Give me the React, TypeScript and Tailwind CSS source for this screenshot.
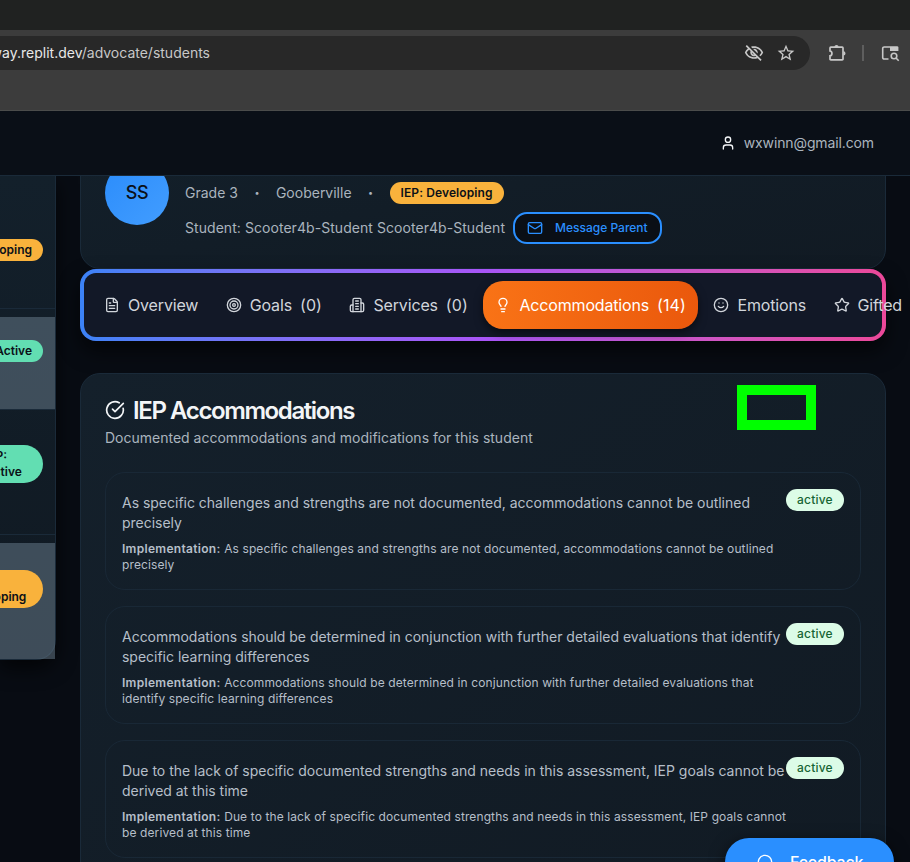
import type { ReactNode } from "react";
import { CircleCheckBig, FileText, Lightbulb, Mail, MessageCircle, Smile, Star, Target, User } from "lucide-react";
import { MdOutlineVisibilityOff, MdStarOutline } from "react-icons/md";

const accommodations: { text: [string, string]; detail: [string, string] }[] = [
  {
    text: [
      "As specific challenges and strengths are not documented, accommodations cannot be outlined",
      "precisely",
    ],
    detail: [
      "As specific challenges and strengths are not documented, accommodations cannot be outlined",
      "precisely",
    ],
  },
  {
    text: [
      "Accommodations should be determined in conjunction with further detailed evaluations that identify",
      "specific learning differences",
    ],
    detail: [
      "Accommodations should be determined in conjunction with further detailed evaluations that",
      "identify specific learning differences",
    ],
  },
  {
    text: [
      "Due to the lack of specific documented strengths and needs in this assessment, IEP goals cannot be",
      "derived at this time",
    ],
    detail: [
      "Due to the lack of specific documented strengths and needs in this assessment, IEP goals cannot",
      "be derived at this time",
    ],
  },
];

function BrowserBar() {
  return (
    <div className="shrink-0">
      <div className="h-[30px] bg-[#202221]" />
      <div className="h-[81px] border-b border-[#4b4c4b] bg-[#3c3c3c] pt-1.5">
        <div className="flex h-[34px] items-center">
          <div className="flex h-full w-[810px] items-center justify-between rounded-r-full bg-[#282828] pr-3.5">
            <div className="flex h-5 w-[210px] justify-end">
              <span className="shrink-0 text-[14px] leading-5 whitespace-nowrap text-[#c7c7c7]">
                <span className="text-[#e8e8e8]">way.replit.dev</span>/advocate/students
              </span>
            </div>
            <div className="flex items-center gap-3 text-[#c7c7c7]">
              <MdOutlineVisibilityOff size={20} />
              <MdStarOutline size={20} />
            </div>
          </div>
          <svg width="20" height="20" viewBox="0 0 20 20" fill="none" className="ml-[17px] shrink-0 text-[#c7c7c7]">
            <path
              d="M3.800 4.200h11.400a.8.8 0 0 1 .8.8v11a.8.8 0 0 1-.8.8H3.800a.8.8 0 0 1-.8-.8v-3.200c2.600-.4 2.600-4.400 0-4.800V5a.8.8 0 0 1 .8-.8Z"
              stroke="currentColor"
              strokeWidth="1.700"
            />
            <path d="M7.400 4a2.100 2.100 0 0 1 4.200 0ZM16.400 8.300a2.100 2.100 0 0 1 0 4.200Z" fill="currentColor" />
          </svg>
          <div className="ml-[15px] h-4 w-0.5 bg-[#5e5e5e]" />
          <svg width="20" height="20" viewBox="0 0 20 20" fill="none" className="ml-4 shrink-0 text-[#c7c7c7]">
            <path d="M8.500 16H4.200A1.500 1.500 0 0 1 2.700 14.500V5.500A1.500 1.500 0 0 1 4.200 4H10" stroke="currentColor" strokeWidth="1.600" />
            <path d="M10 3.200h7a1.400 1.400 0 0 1 1.400 1.400V8H10z" fill="currentColor" />
            <circle cx="14" cy="13" r="2.800" stroke="currentColor" strokeWidth="1.600" />
            <path d="m16 15 2.700 2.700" stroke="currentColor" strokeWidth="1.600" />
          </svg>
        </div>
      </div>
    </div>
  );
}

function Sidebar() {
  return (
    <aside className="h-[484px] w-14 shrink-0 rounded-br-[20px] border-r border-b border-[#1a2a39] bg-linear-to-b from-[#13202b] to-[#101922] text-xs leading-4 font-semibold text-[#0b1018] shadow-[0_8px_20px_rgba(0,0,0,0.7)]">
      <div className="flex h-[133px] justify-end border-b border-[#1a2a39] pt-[63px] pr-3">
        <span className="h-[22px] w-[114px] shrink-0 rounded-full bg-[#f9b23c] px-[11px] py-[3px] text-right whitespace-nowrap">
          IEP: Developing
        </span>
      </div>
      <div className="mt-2 flex h-[93px] justify-end border-b border-[#1a2a39] bg-[#6c7f90]/50 pt-[23px] pr-3">
        <span className="h-[22px] w-[85px] shrink-0 rounded-full bg-[#62deb2] px-[11px] py-[3px] text-right whitespace-nowrap">
          IEP: Active
        </span>
      </div>
      <div className="flex h-[125px] justify-end border-b border-[#1a2a39] pt-[35px] pr-3">
        <span className="h-[38px] w-[69px] shrink-0 rounded-full bg-[#62deb2] px-[11px] py-[3px]">
          IEP:
          <br />
          Active
        </span>
      </div>
      <div className="mt-2 flex h-[116px] justify-end bg-[#6c7f90]/50 pt-[27px] pr-3">
        <span className="h-[38px] w-[93px] shrink-0 rounded-full bg-[#f9b23c] px-[11px] py-[3px]">
          IEP:
          <br />
          Developing
        </span>
      </div>
    </aside>
  );
}

function Dot() {
  return <span className="mx-4 w-[6px] text-center text-[9px]">•</span>;
}

function StudentCard() {
  return (
    <section className="-mt-16 flex h-[157px] items-end gap-4 rounded-[20px] border border-[#1a2a39] bg-linear-to-br from-[#13202b] to-[#111a23] px-6 pb-6">
      <div className="mb-[19px] flex size-16 shrink-0 items-center justify-center rounded-full bg-linear-to-br from-[#2a8cfb] to-[#429dff] text-lg font-medium tracking-[-0.4px] text-[#0b1018]">
        SS
      </div>
      <div className="flex flex-col gap-2 text-sm whitespace-nowrap text-[#aab4be]">
        <div className="flex h-[22px] items-center">
          <span>Grade 3</span>
          <Dot />
          <span>Gooberville</span>
          <Dot />
          <span className="w-[114px] rounded-full bg-[#f9b23c] px-[11px] py-[3px] text-xs leading-4 font-semibold tracking-[0.1px] text-[#0b1018]">
            IEP: Developing
          </span>
        </div>
        <div className="flex items-center gap-2">
          <span className="tracking-[0.055px]">Student: Scooter4b-Student Scooter4b-Student</span>
          <button className="flex h-8 w-[149px] items-center gap-3 rounded-[14px] border-2 border-[#2a8fff] bg-[#0a0f16] pl-3 text-xs font-medium text-[#2a8fff]">
            <Mail size={16} />
            Message Parent
          </button>
        </div>
      </div>
    </section>
  );
}

function BuildingIcon() {
  return (
    <svg
      width="16"
      height="16"
      viewBox="0 0 24 24"
      fill="none"
      stroke="currentColor"
      strokeWidth="2"
      strokeLinecap="round"
      strokeLinejoin="round"
    >
      <path d="M6 22V4a2 2 0 0 1 2-2h8a2 2 0 0 1 2 2v18Z" />
      <path d="M6 12H4a2 2 0 0 0-2 2v6a2 2 0 0 0 2 2h2" />
      <path d="M18 9h2a2 2 0 0 1 2 2v9a2 2 0 0 1-2 2h-2" />
      <path d="M10 6h4M10 10h4M10 14h4M10 18h4" />
    </svg>
  );
}

function Tab({ icon, label, count, active }: { icon: ReactNode; label: string; count?: number; active?: boolean }) {
  return (
    <button
      className={
        active
          ? "flex h-12 shrink-0 items-center gap-2 rounded-[20px] bg-linear-to-r from-[#f97316] to-[#ea580c] px-3 text-white shadow-[0_4px_8px_rgba(0,0,0,0.5)]"
          : "flex h-12 shrink-0 items-center gap-2 rounded-[20px] px-3 text-[#d1d5db]"
      }
    >
      {icon}
      <span className="tracking-[-0.16px]">{label}</span>
      {count !== undefined && <span className="tracking-[0.08px]">({count})</span>}
    </button>
  );
}

function Tabs() {
  return (
    <nav className="h-[72px] rounded-2xl bg-linear-to-r from-[#3b82f6] via-[#a855f7] to-[#ec4899] p-1 shadow-[0_10px_20px_rgba(0,0,0,0.6)]">
      <div className="flex h-16 items-center gap-[3.5px] rounded-xl bg-[#121827] px-2 text-base whitespace-nowrap">
        <Tab icon={<FileText size={16} />} label="Overview" />
        <Tab icon={<Target size={16} />} label="Goals" count={0} />
        <Tab icon={<BuildingIcon />} label="Services" count={0} />
        <Tab icon={<Lightbulb size={16} />} label="Accommodations" count={14} active />
        <Tab icon={<Smile size={16} />} label="Emotions" />
        <Tab icon={<Star size={16} />} label="Gifted" />
      </div>
    </nav>
  );
}

function Accommodations() {
  return (
    <section className="mt-8 h-[600px] rounded-[20px] border border-[#1a2a39] bg-linear-to-br from-[#14202b] to-[#111a23] p-6">
      <div className="flex items-start justify-between">
        <div>
          <h2 className="flex h-6 items-center gap-2 text-2xl font-semibold tracking-[-1.400px] text-[#f3f5f7]">
            <CircleCheckBig size={20} />
            <span className="pt-0.5">IEP Accommodations</span>
          </h2>
          <p className="mt-1.5 text-sm text-[#aab4be]">Documented accommodations and modifications for this student</p>
        </div>
        <div className="-mt-[13px] mr-[45px] h-[45px] w-[79px] border-10 border-[#00ff00]" />
      </div>
      <ul className="mt-6 flex flex-col gap-4">
        {accommodations.map((item) => (
          <li key={item.text[0]} className="flex h-[118px] justify-between rounded-[20px] border border-[#192836] p-4">
            <div className="w-0 whitespace-nowrap text-[#b6bfc9]">
              <p className="mt-1 text-sm tracking-[-0.015px]">
                {item.text[0]}
                <br />
                {item.text[1]}
              </p>
              <p className="mt-2 text-xs leading-4 tracking-[0.11px]">
                <strong className="font-semibold tracking-[0.3px]">Implementation:</strong> {item.detail[0]}
                <br />
                {item.detail[1]}
              </p>
            </div>
            <span className="h-[22px] w-[58px] rounded-full bg-[#dcfce7] text-center text-xs leading-[22px] font-medium tracking-[0.2px] text-[#166534]">
              active
            </span>
          </li>
        ))}
      </ul>
    </section>
  );
}

export default function App() {
  return (
    <div className="relative flex h-[862px] w-[910px] flex-col overflow-hidden bg-[#080c13] font-['Inter',sans-serif]">
      <BrowserBar />
      <header className="flex h-[65px] shrink-0 items-center justify-end border-b border-[#1a2a39] bg-[#0a0f17] pr-9 text-sm tracking-[-0.12px] text-[#aab4be]">
        <User size={16} className="mr-2 text-[#f3f5f7]" />
        wxwinn@gmail.com
      </header>
      <div className="flex min-h-0 flex-1 overflow-hidden">
        <Sidebar />
        <main className="ml-6 w-[806px] shrink-0">
          <StudentCard />
          <Tabs />
          <Accommodations />
        </main>
      </div>
      <button className="absolute top-[838px] left-[725px] flex h-12 w-[169px] items-center gap-[17px] rounded-3xl bg-[#2a8fff] pl-8 text-base font-medium tracking-[-0.2px] text-white shadow-[0_4px_16px_rgba(0,0,0,0.6)]">
        <MessageCircle size={16} />
        Feedback
      </button>
    </div>
  );
}
